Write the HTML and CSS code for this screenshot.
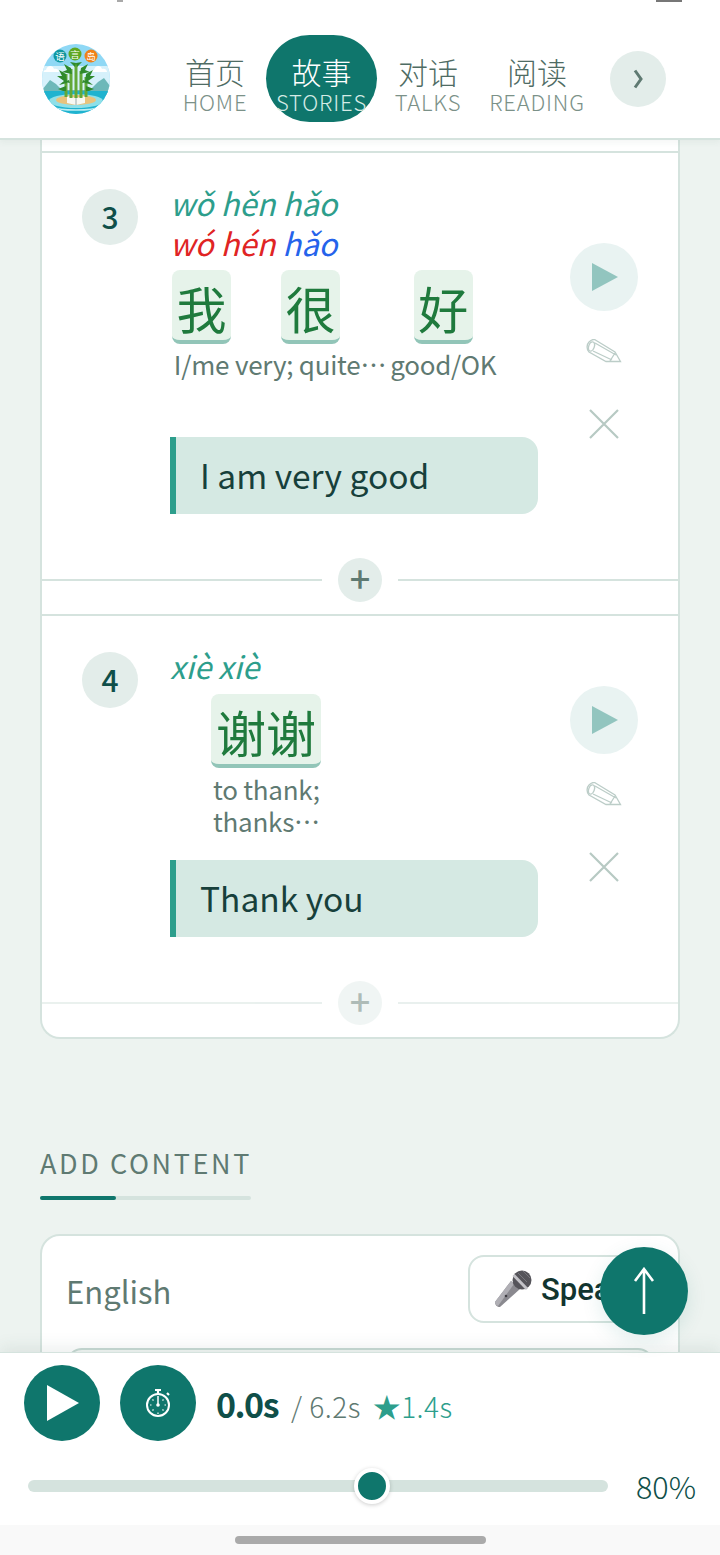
FILE: index.html
```html
<!DOCTYPE html>
<html lang="zh">
<head>
<meta charset="utf-8">
<title>Stories</title>
<link rel="stylesheet" href="styles.css">
</head>
<body>
<div class="app">
  <header class="topbar">
    <span class="status-bit status-left"></span>
    <span class="status-bit status-right"></span>
    <svg class="logo" viewBox="0 0 68 70" aria-label="语言岛 logo">
      <defs><clipPath id="disc"><ellipse cx="34" cy="35" rx="34" ry="35"/></clipPath></defs>
      <g clip-path="url(#disc)">
        <rect width="68" height="70" fill="#8fd8f5"/>
        <rect y="22" width="68" height="26" fill="#d6f1fb"/>
        <path d="M4 26c1-5 7-5 8-1 3-1 5 1 5 3H2c-1-1 0-2 2-2zM52 26c1-5 7-5 8-1 3-1 5 1 5 3H50c-1-1 0-2 2-2z" fill="#fff"/>
        <path d="M0 46l8-10 6 4 6 6h28l8-8 6-4 6 8v10H0z" fill="#6db8b9"/>
        <rect y="47" width="68" height="23" fill="#1fb3cf"/>
        <ellipse cx="34" cy="57" rx="27" ry="7" fill="#8fe0e8"/>
        <path d="M10 63c8 4 40 4 48 0" stroke="#bdeef3" stroke-width="1.500" fill="none"/>
        <ellipse cx="34" cy="56" rx="20" ry="5" fill="#e9c37c"/>
        <path d="M25 52l9 2 9-2v7l-9 2-9-2z" fill="#f7f8f3"/>
        <path d="M34 54v7" stroke="#9aa" stroke-width="1"/>
        <path d="M24 53V30M29 54V25M34 54V19M39 54V27M44 53V33" stroke="#62a838" stroke-width="3" fill="none"/>
        <path d="M24 30l-7-4 3 6-5 0 7 5-5 4 8-2zM44 30l7-4-3 6 5 0-7 5 5 4-8-2zM29 24l-7-4 3 6-5 2 10 2zM39 24l7-4-3 6 5 2-10 2zM34 19l-6-1 5 5zM34 19l6-1-5 5zM24 42l-8 3 5 2 3 0zM44 42l8 3-5 2-3 0zM27 36l-5 2 6 1zM41 36l5 2-6 1z" fill="#2f8a2d"/>
      </g>
      <circle cx="18" cy="12" r="6.500" fill="#0f97a0"/>
      <circle cx="33" cy="10" r="6.500" fill="#5fa821"/>
      <circle cx="49" cy="12" r="6.500" fill="#f08218"/>
      <text x="18" y="15.500" class="logo-char">语</text>
      <text x="33" y="13.500" class="logo-char">言</text>
      <text x="49" y="15.500" class="logo-char">岛</text>
    </svg>
    <nav class="nav">
      <a class="nav-item"><span class="nav-zh">首页</span><span class="nav-en">HOME</span></a>
      <a class="nav-item nav-item-active"><span class="nav-zh">故事</span><span class="nav-en">STORIES</span></a>
      <a class="nav-item"><span class="nav-zh">对话</span><span class="nav-en">TALKS</span></a>
      <a class="nav-item"><span class="nav-zh">阅读</span><span class="nav-en">READING</span></a>
    </nav>
    <button class="nav-next"><svg viewBox="0 0 12 20" class="nav-next-icon"><path d="M3 1.500l6 8.500-6 8.500" fill="none" stroke="#5f7a72" stroke-width="3"/></svg></button>
  </header>

  <main class="content">
    <section class="card sentence-card">
      <div class="card-lead"></div>
      <article class="sentence">
        <div class="num">3</div>
        <div class="body">
          <div class="pinyin">wǒ hěn hǎo</div>
          <div class="pinyin"><span class="tone-bad">wó hén</span> <span class="tone-blue">hǎo</span></div>
          <div class="words">
            <div class="word"><div class="tile">我</div><div class="gloss">I/me</div></div>
            <div class="word"><div class="tile">很</div><div class="gloss">very; quite…</div></div>
            <div class="word"><div class="tile">好</div><div class="gloss">good/OK</div></div>
          </div>
          <div class="translation translation-a">I am very good</div>
        </div>
        <div class="actions">
          <button class="play-soft"><svg viewBox="0 0 28 30"><path d="M1 1l26 14L1 29z" fill="#92c5bf"/></svg></button>
          <svg class="pencil" viewBox="0 0 36 26"><g fill="none" stroke="#bccdc8" stroke-width="1.300"><path d="M9 .700L29 13l5.500 9.500H20L3 13C0 10 1 5 3 3c2-2 4-3 6-2.300z"/><ellipse cx="5.500" cy="7.500" rx="2.800" ry="4.800" transform="rotate(20 5.500 7.500)"/><path d="M7 12L26 21M9 4L30 16M24 22l5-8"/></g></svg>
          <svg class="close" viewBox="0 0 30 30"><path d="M1 1l28 28M29 1L1 29" stroke="#b7c9c3" stroke-width="2.200"/></svg>
        </div>
      </article>
      <div class="adder"><span class="adder-line"></span><span class="adder-btn">+</span><span class="adder-line"></span></div>
      <div class="gap-a"></div>
      <article class="sentence">
        <div class="num">4</div>
        <div class="body">
          <div class="pinyin">xiè xiè</div>
          <div class="words">
            <div class="word word-wide"><div class="tile">谢谢</div><div class="gloss gloss-left">to thank;<br>thanks…</div></div>
          </div>
          <div class="translation translation-b">Thank you</div>
        </div>
        <div class="actions">
          <button class="play-soft"><svg viewBox="0 0 28 30"><path d="M1 1l26 14L1 29z" fill="#92c5bf"/></svg></button>
          <svg class="pencil" viewBox="0 0 36 26"><g fill="none" stroke="#bccdc8" stroke-width="1.300"><path d="M9 .700L29 13l5.500 9.500H20L3 13C0 10 1 5 3 3c2-2 4-3 6-2.300z"/><ellipse cx="5.500" cy="7.500" rx="2.800" ry="4.800" transform="rotate(20 5.500 7.500)"/><path d="M7 12L26 21M9 4L30 16M24 22l5-8"/></g></svg>
          <svg class="close" viewBox="0 0 30 30"><path d="M1 1l28 28M29 1L1 29" stroke="#b7c9c3" stroke-width="2.200"/></svg>
        </div>
      </article>
      <div class="adder adder-faded"><span class="adder-line"></span><span class="adder-btn">+</span><span class="adder-line"></span></div>
    </section>

    <h2 class="section-title">ADD CONTENT</h2>
    <div class="section-rule"><span class="section-rule-fill"></span></div>

    <section class="card add-card">
      <div class="add-head">
        <span class="add-label">English</span>
        <button class="speak">
          <svg class="mic" viewBox="0 0 38 38"><path d="M1 32l16-21 9 8L6 37c-3 0-5-2-5-5z" fill="#8a898f"/><path d="M1 32l16-21 3 3L4 36c-2-1-3-2-3-4z" fill="#b0afb5"/><circle cx="12" cy="26" r="1.300" fill="#3e3d42"/><circle cx="28" cy="10" r="9.500" fill="#55545a"/><path d="M19.500 5L33 19" stroke="#c4c3c8" stroke-width="3"/><path d="M24 3l9 9M29 1l7 7" stroke="#77767c" stroke-width="1"/></svg>
          <span>Speak</span>
        </button>
      </div>
      <div class="add-field"></div>
    </section>
  </main>

  <button class="fab"><svg viewBox="0 0 24 48"><path d="M12 47V3M3 14L12 2l9 12" fill="none" stroke="#fff" stroke-width="2.600"/></svg></button>

  <footer class="player">
    <div class="player-row">
      <button class="round-btn"><svg class="play-icon" viewBox="0 0 32 36"><path d="M0 0l32 18L0 36z" fill="#fff"/></svg></button>
      <button class="round-btn round-btn-b">
        <svg class="timer-icon" viewBox="0 0 26 30"><g fill="none" stroke="#fff"><circle cx="12" cy="17" r="11" stroke-width="2"/><path d="M12 17V8" stroke-width="1.500"/><path d="M9 2h6M12 3v3M21 5l2 2" stroke-width="2.200"/><path d="M12 24.500v1.500M4 17h1.500M18.500 17H20M6.500 11.500l1 1M17.500 11.500l-1 1M6.500 22.500l1-1M17.500 22.500l-1-1" stroke-width="1.200"/></g><circle cx="12" cy="17" r="1.800" fill="#fff"/></svg>
      </button>
      <div class="time">
        <span class="time-now">0.0s</span>
        <span class="time-total">/ 6.2s</span>
        <span class="time-best">★1.4s</span>
      </div>
    </div>
    <div class="speed-row">
      <div class="slider"><span class="slider-thumb"></span></div>
      <span class="speed-value">80%</span>
    </div>
  </footer>
  <div class="home-area"><span class="home-bar"></span></div>
</div>
</body>
</html>
```

FILE: styles.css
```css
* { box-sizing: border-box; }
html, body { margin: 0; padding: 0; }
body {
  font-family: "Noto Sans CJK SC", "Noto Sans", sans-serif;
  background: #edf3f0;
  color: #0f4f49;
}
button { font-family: inherit; padding: 0; border: 0; }

.app {
  position: relative;
  width: 720px;
  height: 1555px;
  overflow: hidden;
  display: flex;
  flex-direction: column;
}

/* Header */
.topbar {
  position: relative;
  flex: none;
  height: 140px;
  background: #fff;
  border-bottom: 2px solid #d5e3de;
  display: flex;
  align-items: center;
  padding: 18px 54px 0 42px;
  z-index: 2;
  box-shadow: 0 3px 6px rgba(60, 90, 80, .05);
}
.status-bit { position: absolute; top: 0; height: 2px; background: #a9a9a9; }
.status-left { left: 117px; width: 6px; }
.status-right { left: 656px; width: 26px; background: #777; }
.logo { width: 68px; height: 70px; flex: none; margin-top: 1px; }
.logo-char { font-size: 9.500px; fill: #fff; text-anchor: middle; }
.nav { display: flex; align-items: center; margin-left: 57px; height: 87px; margin-top: 1px; }
.nav-item {
  width: 96px;
  height: 87px;
  padding-top: 12px;
  display: flex;
  flex-direction: column;
  align-items: center;
  justify-content: center;
  color: #4f6c64;
}
.nav-item:nth-child(2) { margin-left: 3px; width: 111px; }
.nav-item:nth-child(3) { width: 102px; }
.nav-item:nth-child(4) { width: 116px; }
.nav-item-active { background: #0f766c; border-radius: 44px; color: #fff; }
.nav-zh { font-size: 30px; line-height: 32px; font-weight: 300; }
.nav-en { font-size: 22px; line-height: 28px; font-weight: 300; letter-spacing: .8px; color: #7b9188; }
.nav-item-active .nav-en { color: #d5ebe6; }
.nav-next {
  width: 56px;
  height: 56px;
  margin-left: auto;
  margin-top: 1px;
  border-radius: 50%;
  background: #e3edea;
  display: flex;
  align-items: center;
  justify-content: center;
}
.nav-next-icon { width: 12px; height: 20px; }

/* Content */
.content {
  flex: 1;
  min-height: 0;
  overflow: hidden;
  padding: 0 40px;
}
.card {
  background: #fff;
  border: 2px solid #d5e3de;
}
.sentence-card {
  border-top: 0;
  border-radius: 0 0 20px 20px;
  height: 899px;
}
.card-lead { height: 13px; border-bottom: 2px solid #d5e3de; }
.sentence {
  display: flex;
  padding: 36px 0 0 40px;
}
.num {
  flex: none;
  width: 56px;
  height: 56px;
  padding-bottom: 2px;
  border-radius: 50%;
  background: #e3edea;
  color: #0f4f49;
  font-size: 30px;
  font-weight: 500;
  display: flex;
  align-items: center;
  justify-content: center;
}
.body { width: 368px; margin: -4px 0 0 32px; flex: none; }
.pinyin {
  font-size: 31px;
  font-weight: 400;
  font-style: italic;
  line-height: 40px;
  height: 40px;
  color: #2d9e8c;
  position: relative;
  top: -2px;
}
.tone-bad { color: #e02424; }
.tone-blue { color: #2563eb; }
.words { display: flex; gap: 4px; margin-top: 5px; padding-left: 2px; }
.word { display: flex; flex-direction: column; align-items: center; }
.word-wide { margin: 1px 0 0 39px; width: 110px; }
.tile {
  height: 74px;
  padding: 0 4.500px;
  background: #e6f3ea;
  border-bottom: 4px solid #92c5b8;
  border-radius: 8px;
  color: #1f7a3d;
  font-size: 50px;
  line-height: 74px;
  white-space: nowrap;
}
.word-wide .tile { padding: 0 5px; }
.gloss {
  font-size: 26px;
  line-height: 32px;
  color: #5f7a72;
  margin-top: 4px;
  white-space: nowrap;
  letter-spacing: -.25px;
}
.gloss-left { align-self: flex-start; padding-left: 2px; margin-top: 5px; }
.translation {
  background: #d5e9e3;
  border-left: 6px solid #2d9e8c;
  border-radius: 0 16px 16px 0;
  height: 77px;
  padding: 0 0 2px 24px;
  font-size: 33.500px;
  line-height: 75px;
  color: #17403b;
}
.translation-a { margin-top: 57px; }
.translation-b { margin-top: 23px; }
.actions {
  flex: none;
  width: 68px;
  margin-left: 32px;
  margin-bottom: 21px;
  align-self: center;
  display: flex;
  flex-direction: column;
  align-items: center;
}
.play-soft {
  width: 68px;
  height: 68px;
  border-radius: 50%;
  background: #e9f3f2;
  display: flex;
  align-items: center;
  justify-content: center;
  padding-left: 2px;
}
.play-soft svg { width: 28px; height: 30px; }
.pencil { width: 36px; height: 26px; margin-top: 28px; }
.close { width: 30px; height: 30px; margin-top: 44px; }
.adder {
  display: flex;
  align-items: center;
  height: 44px;
}
.sentence + .adder { margin-top: 44px; }
.adder-line { flex: 1; height: 2px; background: #d5e3de; }
.adder-btn {
  width: 44px;
  height: 44px;
  margin: 0 16px;
  border-radius: 50%;
  background: #e3edea;
  color: #5f7a72;
  font-size: 36px;
  font-weight: 500;
  line-height: 38px;
  text-align: center;
}
.adder-faded { opacity: .5; }
.gap-a { height: 14px; border-bottom: 2px solid #d5e3de; }

.section-title {
  margin: 106px 0 0;
  font-size: 27px;
  line-height: 36px;
  font-weight: 400;
  letter-spacing: 2.600px;
  color: #5f7a72;
}
.section-rule { width: 211px; height: 4px; background: #d5e3de; margin-top: 15px; border-radius: 2px; }
.section-rule-fill { display: block; width: 76px; height: 4px; background: #0f766c; border-radius: 2px; }
.add-card {
  margin-top: 34px;
  border-radius: 20px;
  height: 300px;
  padding: 19px 24px;
}
.add-head { display: flex; align-items: center; justify-content: space-between; height: 68px; }
.add-label { font-size: 31px; color: #5f7a72; margin-top: 3px; }
.speak {
  width: 208px;
  height: 68px;
  margin-right: -22px;
  background: #fff;
  border: 2px solid #d5e3de;
  border-radius: 16px;
  display: flex;
  align-items: center;
  gap: 9px;
  padding-left: 24px;
  font-family: Roboto, sans-serif;
  font-weight: 500;
  font-size: 31px;
  color: #12352f;
}
.mic { width: 38px; height: 38px; flex: none; }
.add-field {
  margin-top: 25px;
  height: 60px;
  border: 2px solid #c8dad4;
  border-radius: 16px;
  background: #f4f8f6;
}

/* Floating button */
.fab {
  position: absolute;
  left: 600px;
  top: 1247px;
  width: 88px;
  height: 88px;
  border-radius: 50%;
  background: #0f766c;
  display: flex;
  align-items: center;
  justify-content: center;
  z-index: 4;
  box-shadow: 0 6px 20px rgba(15, 118, 108, .12);
}
.fab svg { width: 24px; height: 48px; }

/* Player */
.player {
  position: relative;
  z-index: 3;
  flex: none;
  height: 173px;
  background: #fff;
  border-top: 1px solid #d5e3de;
  padding: 12px 24px 0 24px;
  box-shadow: 0 -4px 16px rgba(60, 90, 80, .1);
}
.player-row { display: flex; align-items: center; height: 76px; }
.round-btn {
  width: 76px;
  height: 76px;
  border-radius: 50%;
  background: #0f766c;
  flex: none;
  display: flex;
  align-items: center;
  justify-content: center;
}
.round-btn-b { margin-left: 20px; }
.play-icon { width: 32px; height: 36px; margin-left: 2px; }
.timer-icon { width: 26px; height: 30px; margin-left: 2px; }
.time { margin-left: 20px; display: flex; align-items: baseline; }
.time-now { font-size: 34px; font-weight: 700; color: #0f4f49; letter-spacing: -1.500px; }
.time-total { font-size: 28px; font-weight: 300; color: #5f7a72; margin-left: 13px; letter-spacing: .5px; }
.time-best { font-size: 28px; font-weight: 300; color: #2d9e8c; margin-left: 12px; letter-spacing: .4px; }
.speed-row { display: flex; align-items: center; margin-top: 22px; padding-left: 4px; height: 46px; }
.slider {
  position: relative;
  width: 580px;
  height: 12px;
  border-radius: 6px;
  background: #d5e3de;
  flex: none;
}
.slider-thumb {
  position: absolute;
  left: 326px;
  top: -12px;
  width: 36px;
  height: 36px;
  border-radius: 50%;
  background: #0f766c;
  border: 4px solid #fff;
  box-shadow: 0 1px 4px rgba(0, 0, 0, .2);
}
.speed-value { margin-left: 28px; font-size: 30.500px; font-weight: 300; color: #0f4f49; }

.home-area {
  position: relative;
  z-index: 3;
  flex: none;
  height: 30px;
  background: #f9f9f9;
  display: flex;
  justify-content: center;
  align-items: flex-start;
  padding-top: 11px;
}
.home-bar { width: 251px; height: 8px; border-radius: 4px; background: #aaa; }
```
